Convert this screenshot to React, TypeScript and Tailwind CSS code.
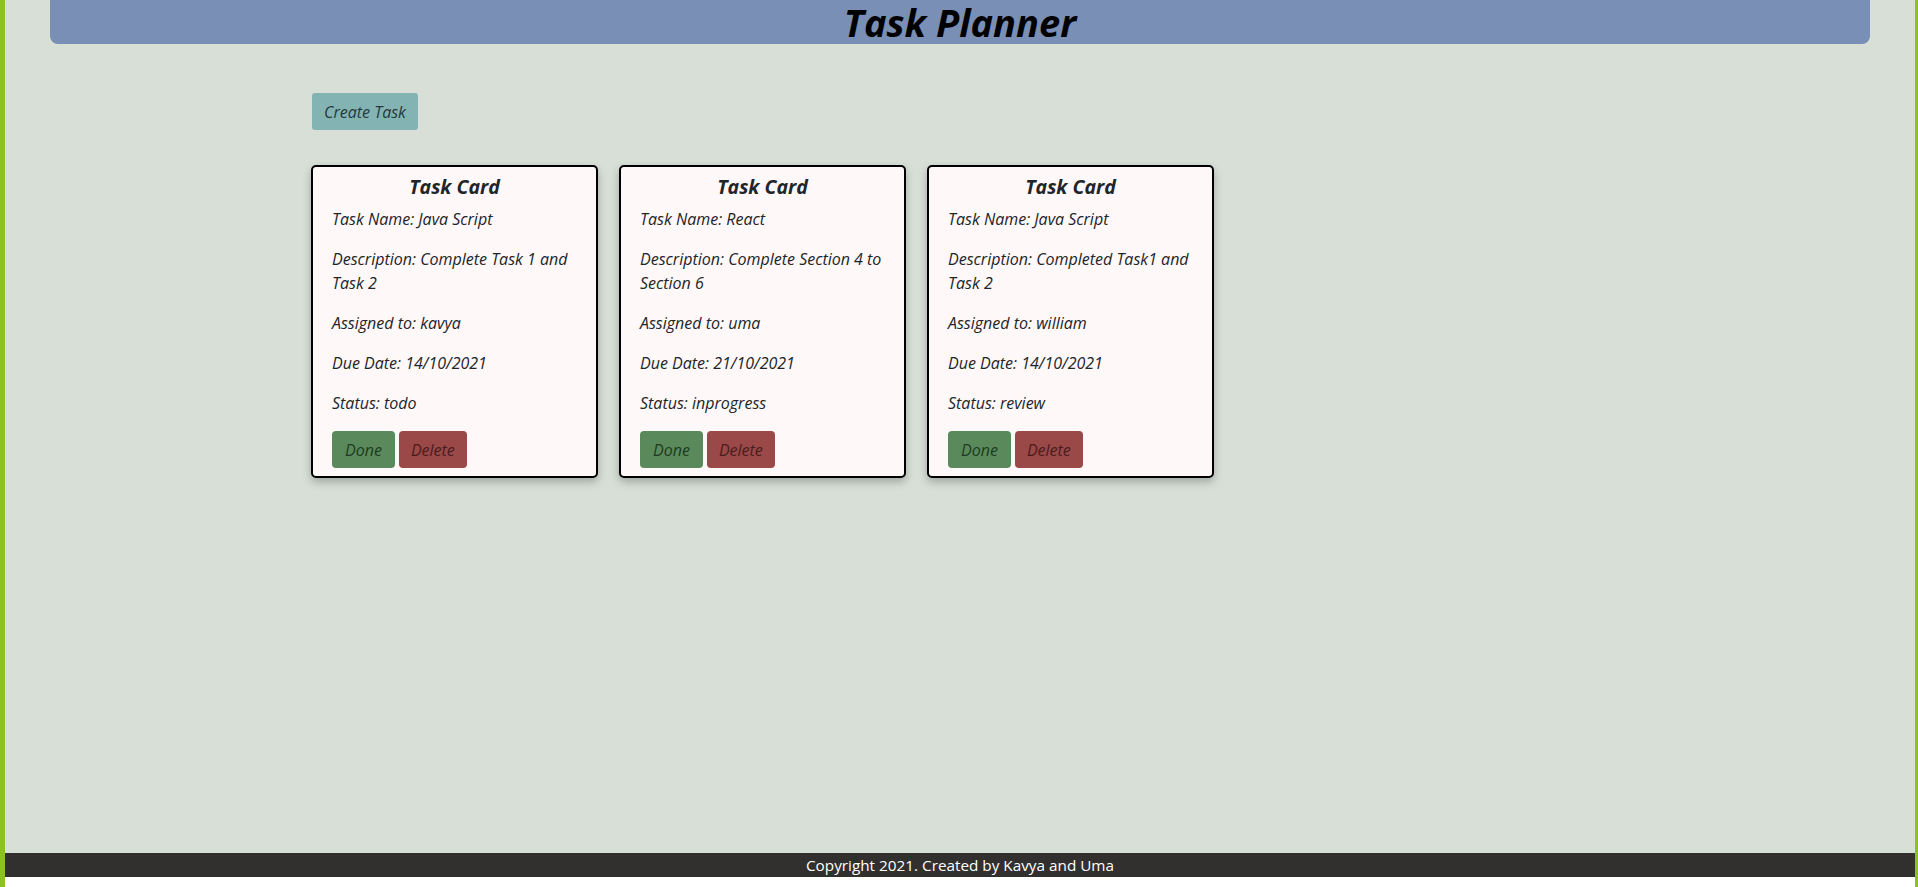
import React from "react";

type Task = {
  name: string;
  description: string;
  assignedTo: string;
  dueDate: string;
  status: string;
};

const tasks: Task[] = [
  {
    name: "Java Script",
    description: "Complete Task 1 and Task 2",
    assignedTo: "kavya",
    dueDate: "14/10/2021",
    status: "todo",
  },
  {
    name: "React",
    description: "Complete Section 4 to Section 6",
    assignedTo: "uma",
    dueDate: "21/10/2021",
    status: "inprogress",
  },
  {
    name: "Java Script",
    description: "Completed Task1 and Task 2",
    assignedTo: "william",
    dueDate: "14/10/2021",
    status: "review",
  },
];

const TaskCard = ({ task }: { task: Task }) => {
  return (
    <div className="w-[287px] rounded-[5px] border-2 border-black bg-[#fff8f8] px-[19px] pt-2 pb-2 shadow-[0_4px_8px_rgba(0,0,0,0.25)]">
      <h5 className="mb-2 text-center text-[19.5px] leading-[24px] font-bold text-[#212529]">
        Task Card
      </h5>
      <p className="mb-4 leading-6">Task Name: {task.name}</p>
      <p className="mb-4 leading-6">Description: {task.description}</p>
      <p className="mb-4 leading-6">Assigned to: {task.assignedTo}</p>
      <p className="mb-4 leading-6">Due Date: {task.dueDate}</p>
      <p className="mb-4 leading-6">Status: {task.status}</p>
      <div className="flex gap-1">
        <button className="h-[37px] rounded-[4px] bg-[#5a8a5c] px-[13px] text-[#1f3a20]">
          Done
        </button>
        <button className="h-[37px] rounded-[4px] bg-[#9b4848] px-[12px] text-[#4a1c1c]">
          Delete
        </button>
      </div>
    </div>
  );
};

export default function App() {
  return (
    <div
      className="flex min-h-[887px] flex-col border-l-[5px] border-r-[3px] border-[#8cc21e] bg-white text-[16px] text-[#212529] italic"
      style={{ fontFamily: '"Open Sans", "Noto Sans", sans-serif' }}
    >
      <main className="flex-1 bg-[#d7dfd7]">
        {/* header bar */}
        <header className="mx-[45px] flex h-[44px] items-center justify-center rounded-b-[8px] bg-[#7a8fb6]">
          <h1 className="text-[38px] leading-[44px] font-bold text-black">Task Planner</h1>
        </header>

        <div className="mx-auto w-[1320px] px-3 pt-[49px]">
          <button className="h-[37px] rounded-[3px] bg-[#84b3b3] px-[12px] text-[#26393b]">
            Create Task
          </button>

          <div className="mt-[35px] -ml-px flex gap-[21px]">
            {tasks.map((t, i) => (
              <TaskCard key={i} task={t} />
            ))}
          </div>
        </div>
      </main>

      <footer className="h-[24px] bg-[#322f2f] text-center text-[15.3px] not-italic leading-6 text-white">
        Copyright 2021. Created by Kavya and Uma
      </footer>
      <div className="h-[10px] bg-white" />
    </div>
  );
}
